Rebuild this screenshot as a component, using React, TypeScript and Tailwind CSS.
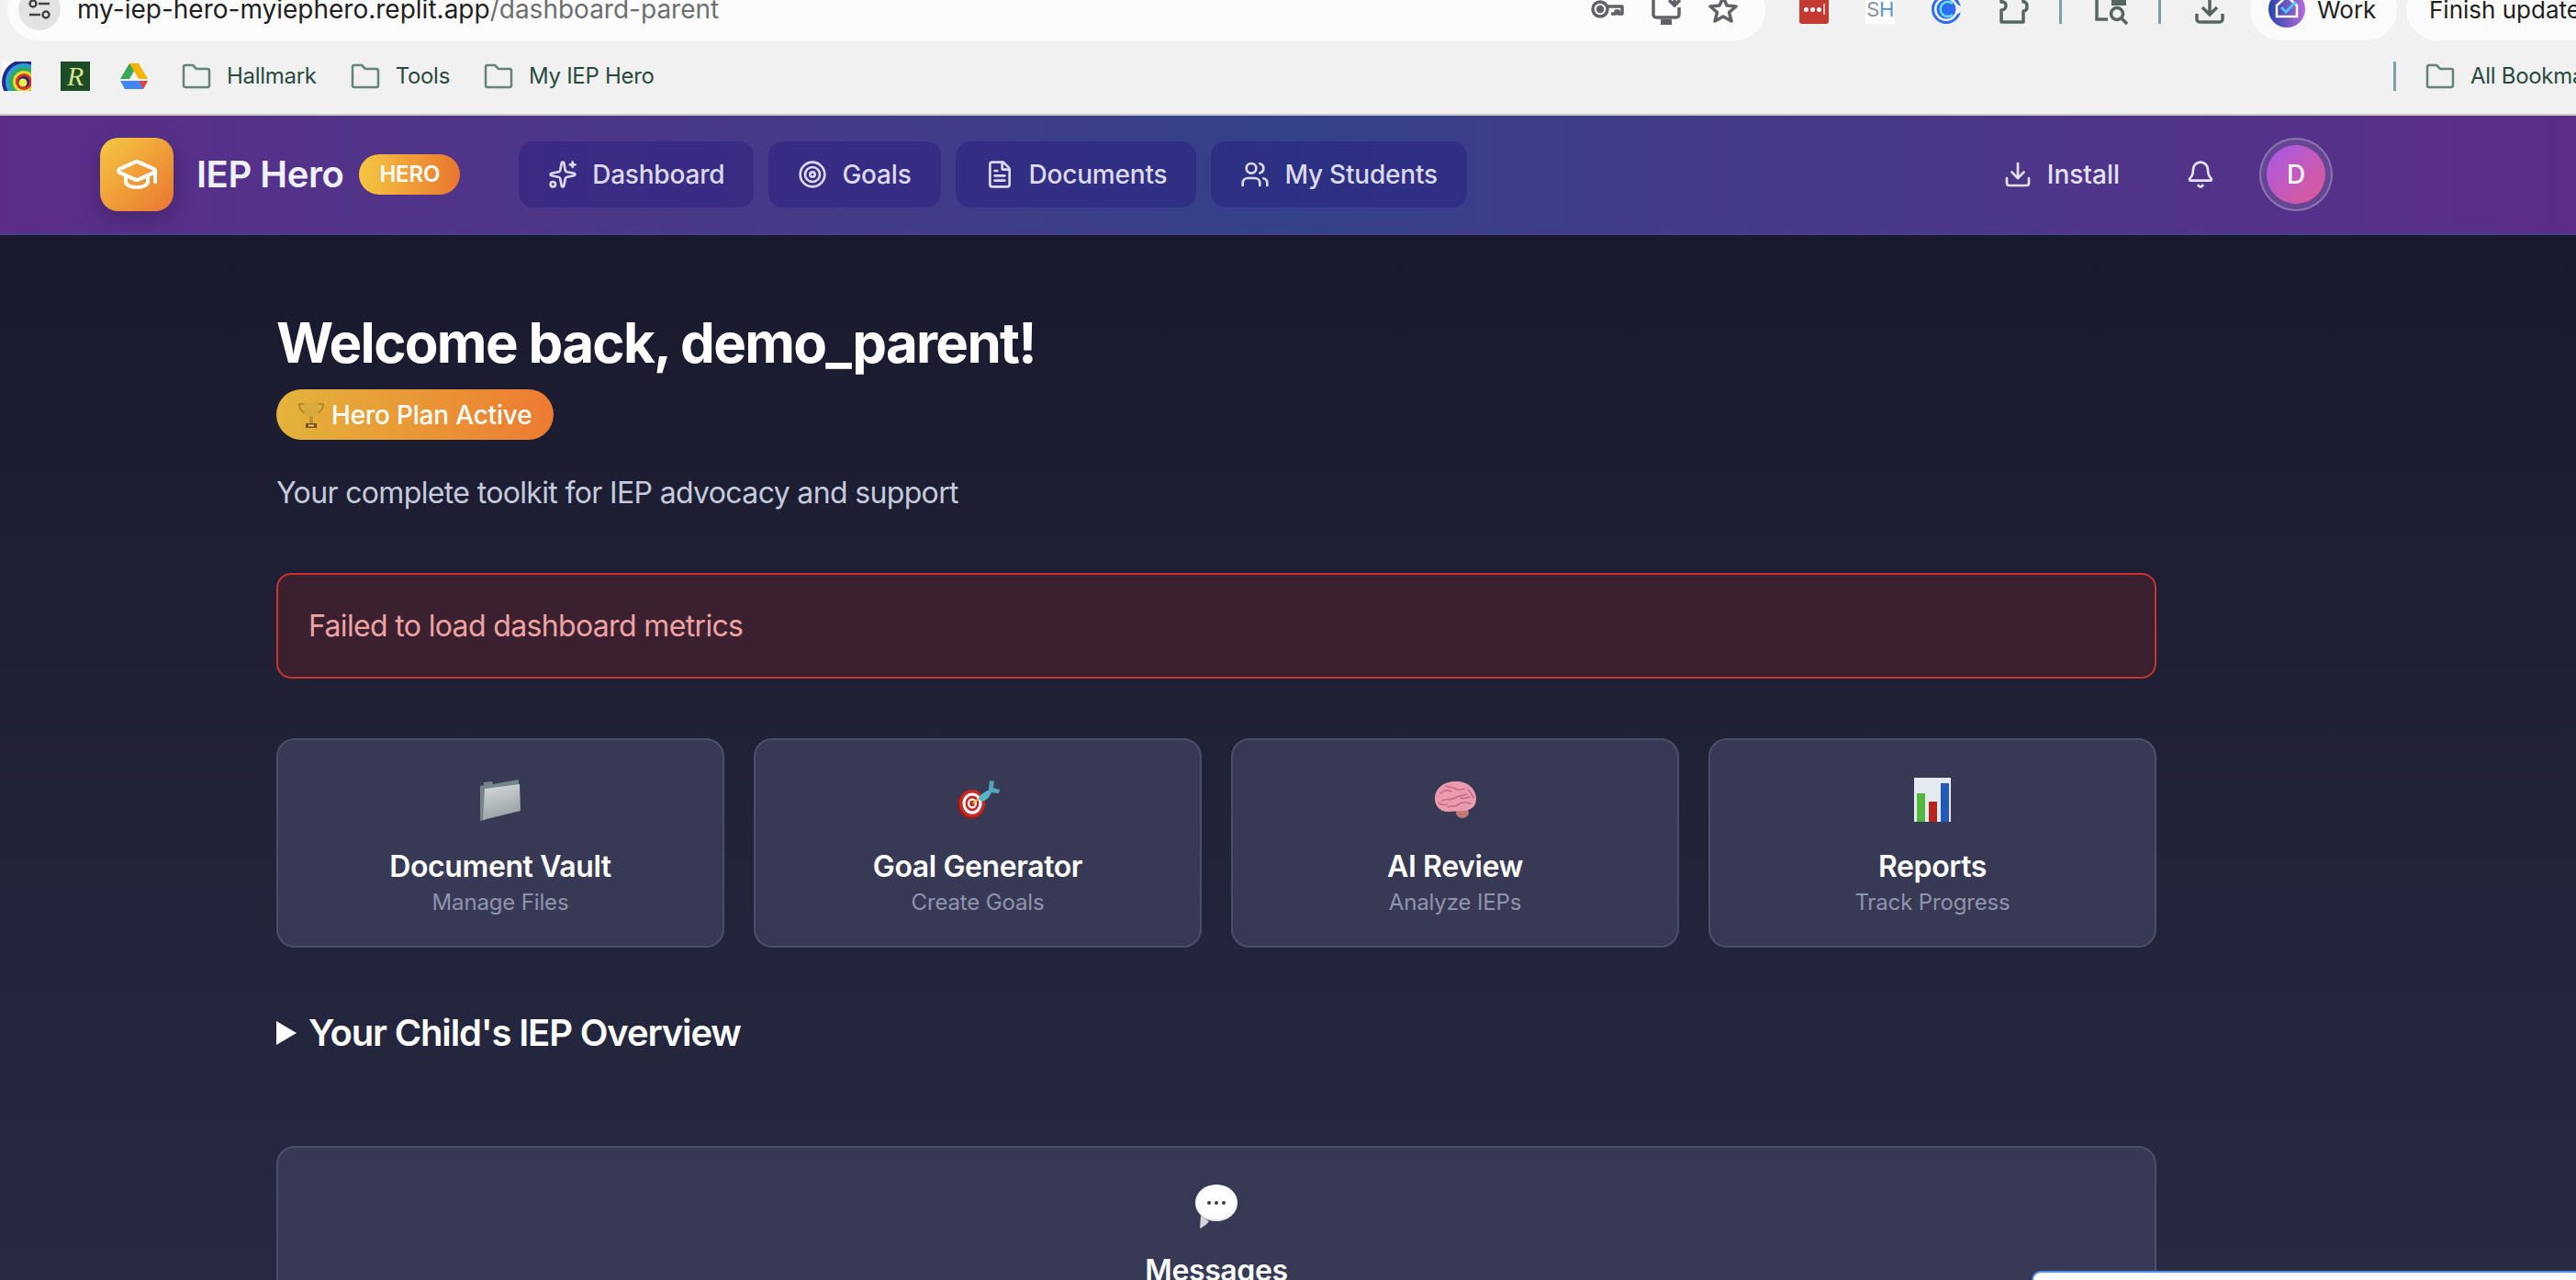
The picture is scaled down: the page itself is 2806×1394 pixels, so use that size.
import { Bell, Download, FileText, GraduationCap, Sparkles, Target, Users } from 'lucide-react';

// --- browser chrome bits ---

function KeyIcon() {
  return (
    <svg width="36" height="24" viewBox="0 0 36 24" fill="none" stroke="#5f6368" strokeWidth="3.5">
      <circle cx="10" cy="12" r="8" />
      <circle cx="10" cy="12" r="2.5" fill="#5f6368" />
      <path d="M18 9h16v8h-4v-3h-3v3h-5" strokeLinejoin="round" />
    </svg>
  );
}

function MonitorIcon() {
  return (
    <svg width="32" height="44" viewBox="0 0 32 44" fill="none" stroke="#5f6368" strokeWidth="3.5">
      <path d="M2 0v28a3 3 0 0 0 3 3h22a3 3 0 0 0 3-3v-8" />
      <path d="M10 36h12" strokeWidth="6" />
      <path d="M25 0v18M19 12l6 6 6-6" />
    </svg>
  );
}

function StarIcon() {
  return (
    <svg width="32" height="32" viewBox="0 0 32 32" fill="none" stroke="#5f6368" strokeWidth="3.5" strokeLinejoin="round">
      <path d="M16 3l4 9 10 1-7.500 6.500 2.500 9.500-9-5-9 5 2.500-9.500L2 13l10-1z" />
    </svg>
  );
}

function CalIcon() {
  return (
    <svg width="32" height="36" viewBox="0 0 32 36" fill="none">
      <circle cx="16" cy="18" r="14.500" stroke="#2f6bf2" strokeWidth="3" />
      <circle cx="16" cy="18" r="10.500" fill="#2f6bf2" />
      <path d="M23 12a8 8 0 1 0 0 12" stroke="#5fe0f5" strokeWidth="2.500" />
      <path d="M27 12l5 3v6l-5 3z" fill="#f1f1f1" />
    </svg>
  );
}

function PuzzleIcon() {
  return (
    <svg width="32" height="36" viewBox="0 0 32 36" fill="none" stroke="#56655f" strokeWidth="3.500">
      <path d="M2 0v10c4 0 5 2 5 4s-1 5-5 5v13h24V20c3 0 4-2 4-5s-1-5-4-5V0" strokeLinejoin="round" />
    </svg>
  );
}

function LensIcon() {
  return (
    <svg width="36" height="40" viewBox="0 0 36 40" fill="none" stroke="#56655f" strokeWidth="3.500">
      <path d="M2 0v31h12" />
      <rect x="18" y="0" width="16" height="16" fill="#56655f" stroke="none" />
      <circle cx="24" cy="25" r="6.500" />
      <path d="M29 30l6 6" />
    </svg>
  );
}

function ToolbarDownload() {
  return (
    <svg width="32" height="40" viewBox="0 0 32 40" fill="none" stroke="#56655f" strokeWidth="3.500">
      <path d="M16 0v26M8 18l8 8 8-8" />
      <path d="M2 25v6a3 3 0 0 0 3 3h22a3 3 0 0 0 3-3v-6" />
    </svg>
  );
}

function WorkAvatar() {
  return (
    <svg width="40" height="48" viewBox="0 0 40 48" className="shrink-0">
      <defs>
        <linearGradient id="work" x1="0" x2="1" y1="0" y2="0">
          <stop offset="0" stopColor="#2545ad" />
          <stop offset="1" stopColor="#b66ad8" />
        </linearGradient>
      </defs>
      <circle cx="20" cy="24" r="20" fill="url(#work)" />
      <path d="M9 20l11-10 11 10v12H9z" fill="none" stroke="#fff" strokeWidth="2.500" />
      <path d="M14 22l5 5 11-11" fill="none" stroke="#4fc3f7" strokeWidth="3" />
    </svg>
  );
}

function FolderIcon() {
  return (
    <svg width="32" height="32" viewBox="0 0 32 32" fill="none" stroke="#658378" strokeWidth="2.500" className="shrink-0">
      <path d="M2 6a2 2 0 0 1 2-2h8l4 4h12a2 2 0 0 1 2 2v16a2 2 0 0 1-2 2H4a2 2 0 0 1-2-2z" strokeLinejoin="round" />
    </svg>
  );
}

function RainbowFav() {
  return (
    <svg width="32" height="32" viewBox="0 0 32 32" className="shrink-0">
      <rect width="32" height="32" fill="#ffffff" />
      <circle cx="24" cy="22" r="24" fill="#232a8c" />
      <circle cx="24" cy="22" r="20" fill="#2f9bd8" />
      <circle cx="24" cy="22" r="16" fill="#2fae5a" />
      <circle cx="24" cy="22" r="12" fill="#e8d832" />
      <circle cx="24" cy="22" r="9" fill="#d8312a" />
      <circle cx="24" cy="22" r="6" fill="#1d2580" />
      <circle cx="23" cy="23" r="4.500" fill="#f2f04a" />
    </svg>
  );
}

function DriveFav() {
  return (
    <svg width="30" height="28" viewBox="0 0 30 28" className="shrink-0">
      <path d="M10 0h10L10 17H0z" fill="#3aa757" />
      <path d="M10 0h10l10 17H20z" fill="#f4b400" />
      <path d="M0 19h30l-5 9H5z" fill="#4285f4" />
      <path d="M21 19h9l-5 9z" fill="#ea4335" />
    </svg>
  );
}

// --- emoji drawings ---

function TrophyEmoji() {
  return (
    <svg width="28" height="30" viewBox="0 0 28 30" fill="none" className="shrink-0">
      <path d="M6 3H1c0 6 3 9 8 10M22 3h5c0 6-3 9-8 10" stroke="#b08a2e" strokeWidth="2" />
      <path d="M6 1h16v8c0 6-4 9-8 9s-8-3-8-9z" fill="#d8aa3e" />
      <path d="M12 17h4v7h-4z" fill="#b8902f" />
      <path d="M8 24h12v5H8z" fill="#7a4e25" />
      <path d="M11 25.500h6v2h-6z" fill="#e5c468" />
    </svg>
  );
}

function FolderEmoji() {
  return (
    <svg width="46" height="46" viewBox="0 0 46 46">
      <defs>
        <linearGradient id="fold" x1="0" x2="0.300" y1="0" y2="1">
          <stop offset="0" stopColor="#d8dcdd" />
          <stop offset="1" stopColor="#9aa3a6" />
        </linearGradient>
      </defs>
      <path d="M1 8l4-1V4l9-1 1 3 28-5v6L6 45 1 46z" fill="#76858a" />
      <path d="M6 11l38-5 1 29L4 45z" fill="url(#fold)" />
    </svg>
  );
}

function DartEmoji() {
  return (
    <svg width="50" height="44" viewBox="0 0 50 44">
      <ellipse cx="18" cy="27" rx="15" ry="16" fill="#8e1c1c" />
      <ellipse cx="19" cy="26" rx="14" ry="15" fill="#c42b26" />
      <ellipse cx="19" cy="26" rx="10.500" ry="11.500" fill="#ffffff" />
      <ellipse cx="19" cy="26" rx="7.500" ry="8.500" fill="#c42b26" />
      <ellipse cx="19" cy="26" rx="5" ry="5.500" fill="#ffffff" />
      <ellipse cx="19" cy="26" rx="2.800" ry="3.200" fill="#c42b26" />
      <path d="M20 26l7-6" stroke="#e4c14a" strokeWidth="2" />
      <path d="M26 21c2-6 8-8 12-10l2 3c-2 4-5 9-11 10z" fill="#57b4c6" />
      <path d="M37 10l1-9 5 1-1 7 7 2-1 4-10-1z" fill="#4fa5b8" />
    </svg>
  );
}

function BrainEmoji() {
  return (
    <svg width="48" height="42" viewBox="0 0 48 42" fill="none">
      <ellipse cx="32" cy="35" rx="7" ry="6" fill="#c27a78" />
      <path d="M2 20C2 8 12 1 25 1c13 0 22 8 22 19 0 8-6 13-14 13-6 0-11 1-17 1C8 34 2 28 2 20z" fill="#eb9bae" />
      <path d="M8 14c4-4 8-4 12-2M14 6c4 2 8 1 11 3s6 1 9 0M10 22c5-3 9 0 14-3s8-2 12-4M38 10c3 3 5 5 6 9M16 29c5-2 8 0 12-3s8-2 13-1M6 24c3 3 6 3 9 2M30 19c4 1 7 0 10-1" stroke="#c96a85" strokeWidth="1.600" strokeLinecap="round" />
    </svg>
  );
}

function ChartEmoji() {
  return (
    <svg width="40" height="48" viewBox="0 0 40 48">
      <rect width="40" height="48" fill="#e4eaf2" />
      <rect x="3" y="17" width="9" height="31" fill="#52b83f" />
      <rect x="16" y="26" width="9" height="22" fill="#b8241d" />
      <rect x="29" y="6" width="9" height="42" fill="#2259bb" />
    </svg>
  );
}

function BubbleEmoji() {
  return (
    <svg width="46" height="48" viewBox="0 0 46 48">
      <defs>
        <radialGradient id="bub" cx="0.500" cy="0.400" r="0.700">
          <stop offset="0.700" stopColor="#ffffff" />
          <stop offset="1" stopColor="#c9c9c9" />
        </radialGradient>
      </defs>
      <path d="M6 34l-1 14c4-2 8-5 10-8z" fill="#d5d5d5" />
      <ellipse cx="23" cy="20" rx="23" ry="20" fill="url(#bub)" />
      <circle cx="15" cy="20" r="2" fill="#3d3d3d" />
      <circle cx="23" cy="20" r="2" fill="#3d3d3d" />
      <circle cx="31" cy="20" r="2" fill="#3d3d3d" />
    </svg>
  );
}

const navItems = [
  { label: 'Dashboard', Icon: Sparkles },
  { label: 'Goals', Icon: Target },
  { label: 'Documents', Icon: FileText },
  { label: 'My Students', Icon: Users },
];

const actions = [
  { title: 'Document Vault', sub: 'Manage Files', icon: <FolderEmoji /> },
  { title: 'Goal Generator', sub: 'Create Goals', icon: <DartEmoji /> },
  { title: 'AI Review', sub: 'Analyze IEPs', icon: <BrainEmoji /> },
  { title: 'Reports', sub: 'Track Progress', icon: <ChartEmoji /> },
];

function BrowserChrome() {
  return (
    <div className="h-[126px] shrink-0 bg-[#f1f1f1] border-b-2 border-[#c9cbc9] overflow-hidden">
      {/* top row is cut off by the capture */}
      <div className="h-[44px] overflow-hidden">
        <div className="-mt-[24px] h-[68px] flex items-center whitespace-nowrap">
          <div className="ml-[8px] w-[1915px] h-[68px] shrink-0 bg-[#fcfcfc] rounded-full flex items-center pl-[12px] pr-[30px]">
            <div className="w-[46px] h-[46px] rounded-full bg-[#e3e3e3] flex items-center justify-center shrink-0">
              <svg width="26" height="26" viewBox="0 0 26 26" fill="none" stroke="#444" strokeWidth="2.500">
                <path d="M12 7h12M2 19h12" />
                <circle cx="6" cy="7" r="3.500" />
                <circle cx="20" cy="19" r="3.500" />
              </svg>
            </div>
            <span className="ml-[18px] text-[28px] text-[#1f1f1f]">
              my-iep-hero-myiephero.replit.app<span className="text-[#6d6f72]">/dashboard-parent</span>
            </span>
            <div className="ml-auto flex items-center gap-[30px]">
              <KeyIcon />
              <MonitorIcon />
              <StarIcon />
            </div>
          </div>
          <div className="ml-[37px] w-[32px] h-[32px] shrink-0 bg-[#c33b30] rounded-[3px] flex items-center justify-center gap-[2px]">
            <span className="w-[5px] h-[5px] rounded-full bg-white" />
            <span className="w-[5px] h-[5px] rounded-full bg-white" />
            <span className="w-[5px] h-[5px] rounded-full bg-white" />
            <span className="w-[2px] h-[12px] bg-white/70" />
          </div>
          <div className="ml-[40px] w-[32px] h-[32px] shrink-0 bg-white text-[22px] leading-[32px] text-center tracking-tight">
            <span className="text-[#8a919c]">S</span>
            <span className="text-[#5c8fd0]">H</span>
          </div>
          <div className="ml-[40px] shrink-0"><CalIcon /></div>
          <div className="ml-[42px] shrink-0"><PuzzleIcon /></div>
          <div className="ml-[33px] w-[3px] h-[32px] bg-[#7d9fa8] shrink-0" />
          <div className="ml-[36px] shrink-0"><LensIcon /></div>
          <div className="ml-[33px] w-[3px] h-[32px] bg-[#7d9fa8] shrink-0" />
          <div className="ml-[37px] shrink-0"><ToolbarDownload /></div>
          <div className="ml-[28px] w-[160px] h-[68px] shrink-0 bg-[#fbfbfb] rounded-full flex items-center pl-[20px]">
            <WorkAvatar />
            <span className="ml-[13px] text-[26px] text-[#1f1f1f]">Work</span>
          </div>
          <div className="ml-[10px] w-[300px] h-[68px] shrink-0 bg-[#fbfbfb] rounded-full flex items-center pl-[25px]">
            <span className="text-[26px] text-[#1f1f1f]">Finish update</span>
          </div>
        </div>
      </div>
      <div className="h-[80px] flex items-center whitespace-nowrap text-[24px] tracking-[-0.3px] text-[#2a4a3e]">
        <div className="flex-1 flex items-center pb-[2px] pl-[2px]">
          <RainbowFav />
          <div className="ml-[32px] w-[32px] h-[32px] bg-[#1d4d26] text-[#dbe38e] text-[30px] leading-[32px] text-center italic font-['Liberation_Serif',serif] shrink-0">R</div>
          <div className="ml-[33px]"><DriveFav /></div>
          <div className="ml-[37px] flex items-center gap-[17px]"><FolderIcon /><span>Hallmark</span></div>
          <div className="ml-[37px] flex items-center gap-[17px]"><FolderIcon /><span>Tools</span></div>
          <div className="ml-[37px] flex items-center gap-[17px]"><FolderIcon /><span>My IEP Hero</span></div>
        </div>
        <div className="w-[199px] shrink-0 overflow-hidden flex items-center pb-[2px]">
          <div className="w-[3px] h-[32px] bg-[#7d9fa8] shrink-0" />
          <div className="ml-[32px] flex items-center gap-[17px]"><FolderIcon /><span>All Bookmarks</span></div>
        </div>
      </div>
    </div>
  );
}

function AppHeader() {
  return (
    <header className="h-[130px] shrink-0 bg-gradient-to-r from-[#5b2c8a] via-[#33408a] to-[#5b2c8a] border-b-2 border-[#4b3f8f] flex items-center pl-[109px] pr-[265px]">
      <div className="w-[80px] h-[80px] rounded-[20px] bg-gradient-to-br from-[#f4c742] to-[#e8752f] shadow-[0_8px_24px_rgba(0,0,0,0.2)] flex items-center justify-center shrink-0">
        <GraduationCap className="w-[48px] h-[48px] text-white" strokeWidth={2} />
      </div>
      <span className="ml-[25px] text-[40px] font-semibold tracking-[-0.45px] text-[#eef1fb]">IEP Hero</span>
      <span className="ml-[17px] h-[44px] px-[22px] rounded-full bg-gradient-to-r from-[#f4c742] to-[#e8752f] text-white text-[24px] font-semibold tracking-[-0.2px] flex items-center">HERO</span>
      <nav className="ml-[64px] flex items-center gap-[16px]">
        {navItems.map(({ label, Icon }) => (
          <div key={label} className="h-[72px] px-[32px] rounded-[16px] bg-[#241a78]/40 text-[#dcdaf0] text-[28px] font-medium tracking-[-0.2px] flex items-center gap-[16px]">
            <Icon className="w-[32px] h-[32px]" strokeWidth={2} />
            <span>{label}</span>
          </div>
        ))}
      </nav>
      <div className="ml-auto flex items-center text-[#e4e2f3] text-[28px] font-medium">
        <Download className="w-[32px] h-[32px]" strokeWidth={2} />
        <span className="ml-[16px]">Install</span>
        <Bell className="ml-[72px] w-[32px] h-[32px]" strokeWidth={2} />
        <div className="ml-[48px] w-[80px] h-[80px] rounded-full bg-white/10 border-2 border-white/25 flex items-center justify-center">
          <div className="w-[64px] h-[64px] rounded-full bg-gradient-to-br from-[#a855e8] to-[#e0558f] flex items-center justify-center text-white">D</div>
        </div>
      </div>
    </header>
  );
}

export default function App() {
  return (
    <div className="relative h-[1394px] overflow-hidden flex flex-col font-['Inter',sans-serif]">
      <BrowserChrome />
      <AppHeader />
      <main className="flex-1 bg-gradient-to-b from-[#191a2e] to-[#282a42] px-[301px] pr-[457px] pt-[84px] overflow-hidden">
        <h1 className="text-[60px] leading-[66px] font-bold text-white tracking-[-1.7px]">Welcome back, demo_parent!</h1>
        <div className="mt-[18px] w-fit h-[55px] pl-[24px] pr-[24px] rounded-full bg-gradient-to-r from-[#e3b33b] to-[#ed7a32] text-white text-[28px] font-medium tracking-[-0.2px] flex items-center gap-[8px]">
          <TrophyEmoji />
          <span>Hero Plan Active</span>
        </div>
        <p className="mt-[36px] text-[32px] leading-[44px] tracking-[-0.65px] text-[#c5cbdc]">Your complete toolkit for IEP advocacy and support</p>
        <div className="mt-[65px] h-[115px] rounded-[16px] border-2 border-[#c8352f] bg-[#3b212f] flex items-center px-[33px] text-[32px] tracking-[-0.65px] text-[#f0a3a3]">
          Failed to load dashboard metrics
        </div>
        <div className="mt-[65px] grid grid-cols-4 gap-[32px]">
          {actions.map((a) => (
            <div key={a.title} className="h-[228px] rounded-[20px] border-2 border-[#475068] bg-[#383a55] flex flex-col items-center">
              <div className="mt-[40px] h-[50px] flex items-center justify-center">{a.icon}</div>
              <div className="mt-[26px] text-[32px] leading-[44px] font-semibold tracking-[-0.4px] text-white">{a.title}</div>
              <div className="mt-[1px] text-[24px] leading-[32px] tracking-[-0.15px] text-[#8e94ad]">{a.sub}</div>
            </div>
          ))}
        </div>
        <div className="mt-[68px] flex items-center gap-[13px] text-[40px] leading-[50px] font-semibold tracking-[-1.15px] text-white">
          <span className="w-0 h-0 border-y-[13px] border-y-transparent border-l-[22px] border-l-white" />
          <span>Your Child's IEP Overview</span>
        </div>
        <div className="mt-[98px] h-[300px] rounded-[20px] border-2 border-[#475068] bg-[#383a55] flex flex-col items-center">
          <div className="mt-[40px]"><BubbleEmoji /></div>
          <div className="mt-[24px] text-[32px] leading-[44px] font-semibold tracking-[-0.4px] text-white">Messages</div>
        </div>
      </main>
      {/* chat widget peeking in at the corner */}
      <div className="absolute right-0 bottom-0 w-[593px] h-[10px] bg-white border-t-2 border-l-2 border-[#4a8fe8] rounded-tl-[14px]" />
    </div>
  );
}
